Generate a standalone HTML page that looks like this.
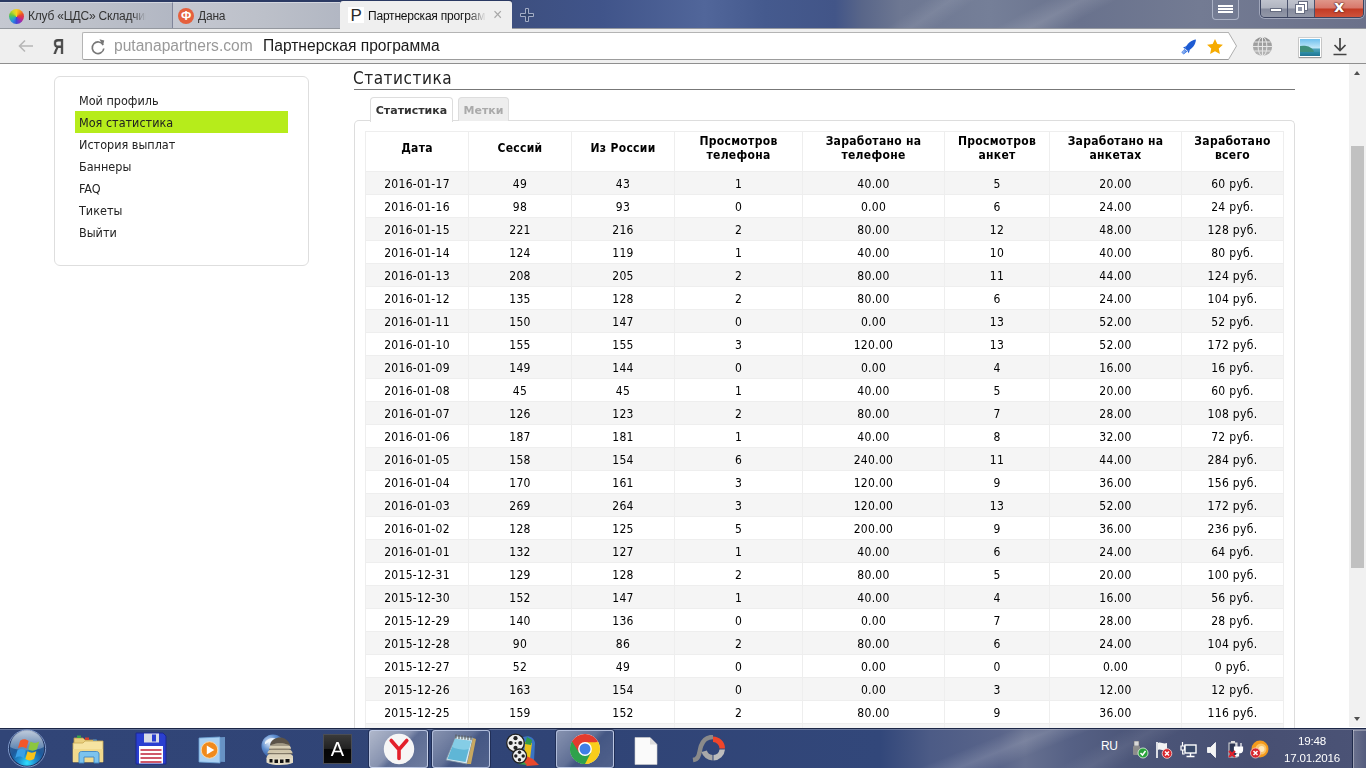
<!DOCTYPE html>
<html lang="ru">
<head>
<meta charset="utf-8">
<title>Партнерская программа</title>
<style>
*{box-sizing:border-box;margin:0;padding:0}
html,body{width:1366px;height:768px;overflow:hidden;background:#fff}
body{position:relative;font-family:"DejaVu Sans Condensed","DejaVu Sans","Liberation Sans",sans-serif;font-size:12px;color:#000}
.abs{position:absolute}
/* ---------- browser chrome ---------- */
#titlebar{position:absolute;left:0;top:0;width:1366px;height:29px;
 background:linear-gradient(90deg,#3d4f80 0,#3d4f7f 512px,#40548a 600px,#51669a 705px,#455a8e 765px,#425588 835px,#596689 862px,#6d7792 900px,#757f98 990px,#69728d 1080px,#737b93 1200px,#6b718a 1366px);}
#titlebar .topline{position:absolute;left:0;top:0;width:512px;height:2px;background:#2b3a63}
.tab{position:absolute;top:2px;height:27px;font-family:"Liberation Sans",sans-serif;font-size:12px;letter-spacing:-.2px;color:#333;white-space:nowrap;overflow:hidden}
.tab.in{background:linear-gradient(90deg,#c5c8d1,#bcc0c9 55%,#b2b7c3);border-right:1px solid #80859a;border-top:1px solid #d3d6de;height:26px;border-bottom:none}
.tab.act{z-index:5;background:#efefef;border-radius:3px 3px 0 0;top:1px;height:28px;color:#111}
.tab.act .t{top:8px}.tab.act .fav{top:6px}.tab.act .x{top:4px}
.tab .t{position:absolute;top:6px;left:28px}
#toolbar{position:absolute;left:0;top:28px;width:1366px;height:36px;background:#efefef;border-bottom:1px solid #8f8f8f;border-top:1px solid #94989f}
#toolbar .bl{position:absolute;left:0;bottom:0;width:1366px;height:1px;background:#a5a5a5}
#omni{position:absolute;left:82px;top:3px;width:1147px;height:28px;background:#fff;border:1px solid #b4b4b4;border-bottom-color:#9c9c9c;border-right:none;border-radius:2px 0 0 2px}

.fav{position:absolute;left:8px;top:5px;width:16px;height:16px}
.wheel{border-radius:50%;background:conic-gradient(#f6d21f,#f39a1c,#e8482c,#d42a6a,#8a2fc0,#3e47d6,#2b8be0,#2fb4a0,#6fc53a,#c9d82a,#f6d21f);left:9px;width:15px;height:15px;top:6px}
.fcirc{border-radius:50%;background:#e5603d;color:#fff;font:bold 12px/16px "Liberation Sans",sans-serif;text-align:center;left:5px;top:5px}
.psq{background:#fff;color:#2a2a2a;font:17px/17px "Liberation Sans",sans-serif;text-align:center;left:8px;top:5px}
.tab .x{position:absolute;left:153px;top:3px;font:16px/20px "Liberation Sans",sans-serif;color:#a8a8a8}
.fade{width:118px;overflow:hidden;-webkit-mask-image:linear-gradient(90deg,#000 104px,transparent 118px);mask-image:linear-gradient(90deg,#000 104px,transparent 118px)}
.fade2{width:118px;overflow:hidden;-webkit-mask-image:linear-gradient(90deg,#000 100px,transparent 118px);mask-image:linear-gradient(90deg,#000 100px,transparent 118px)}
#menubtn{position:absolute;left:1212px;top:-3px;width:27px;height:23px;border:1px solid rgba(200,206,222,.65);border-radius:4px;background:rgba(120,128,152,.35)}
#menubtn i{position:absolute;left:5px;width:15px;height:2px;background:#fff}
#menubtn i:nth-child(1){top:7px}#menubtn i:nth-child(2){top:10px}#menubtn i:nth-child(3){top:13px;height:2px}
#winbtns{position:absolute;left:1260px;top:-1px;width:104px;height:19px;border:1px solid #3c4460;border-top:none;border-radius:0 0 5px 5px;overflow:hidden;box-shadow:0 0 0 1px rgba(220,225,240,.45)}
.wb{position:absolute;top:0;height:19px}
.wb.min{left:0;width:27px;background:linear-gradient(#c2c5cf 0,#b0b4c0 48%,#858a9c 52%,#9499a9 100%);border-right:1px solid #4a516b}
.wb.max{left:27px;width:27px;background:linear-gradient(#c2c5cf 0,#b0b4c0 48%,#858a9c 52%,#9499a9 100%);border-right:1px solid #4a516b}
.wb.cls{left:54px;width:49px;background:linear-gradient(#e09a8d 0,#d8776a 48%,#c23a24 52%,#d0563f 100%)}
.wb.min b{position:absolute;left:9px;top:9px;width:12px;height:4px;background:#fff;border:1px solid #666c80}
.wb.max b{position:absolute;border:2px solid #fff;outline:1px solid #666c80;width:8px;height:8px}
.wb.max .b1{left:11px;top:3px}.wb.max .b2{left:8px;top:6px;background:#9096a8}
.wb.cls span{position:absolute;left:19px;top:-1px;font:bold 16px/18px "DejaVu Sans",sans-serif;color:#fff;text-shadow:0 0 1px #522,0 0 1px #522,0 0 2px #522}
.ya{position:absolute;left:53px;top:5px;font:bold 22px/26px "Liberation Sans",sans-serif;color:#484848;transform:scaleX(.7);transform-origin:0 0}
.url{position:absolute;left:30.5px;top:3px;font:15.6px/20px "Liberation Sans",sans-serif;color:#999;white-space:nowrap}
.ttl{position:absolute;left:179.5px;top:3px;font:15.6px/20px "Liberation Sans",sans-serif;color:#1a1a1a;white-space:nowrap}
.pic{position:absolute;left:1299px;top:9px;width:22px;height:19px;border:1px solid #fff;box-shadow:0 1px 1px #999,0 0 0 1px #cfcfcf;overflow:hidden;background:linear-gradient(#6fc0ee 0,#bfe6f8 50%,#4aa0b8 62%,#2a7f9a 100%)}
.pic:before{content:"";position:absolute;left:-2px;top:7px;width:16px;height:8px;background:#3f8f7c;border-radius:60% 90% 0 0;transform:rotate(8deg)}
.pic:after{content:"";position:absolute;left:0;top:13px;width:22px;height:5px;background:linear-gradient(#2f8fa8,#1f6f90)}
/* ---------- page ---------- */
#page{position:absolute;left:0;top:65px;width:1349px;height:663px;overflow:hidden;will-change:transform}
#side{position:absolute;left:54px;top:11px;width:255px;height:190px;border:1px solid #dedede;border-radius:6px;background:#fff}
#side a{position:absolute;left:20px;width:213px;height:22px;line-height:23px;padding-left:4px;font-size:12.5px;color:#222;text-decoration:none;white-space:nowrap}
#side a.cur{background:#b6ec1b}
h1{position:absolute;left:353px;top:2px;font-size:17px;letter-spacing:.55px;font-weight:normal;color:#222;line-height:22px;white-space:nowrap}
#hr{position:absolute;left:354px;top:24px;width:941px;height:1px;background:#777}
.ptab{position:absolute;top:32px;height:24px;border:1px solid #ddd;border-bottom:none;border-radius:4px 4px 0 0;font-family:"DejaVu Sans","Liberation Sans",sans-serif;font-weight:bold;font-size:11px;line-height:25px;text-align:center;white-space:nowrap}
#panel{position:absolute;left:354px;top:55px;width:941px;height:640px;border:1px solid #ddd;border-radius:5px 5px 0 0;border-bottom:none}
table{position:absolute;left:365px;top:66px;width:918px;border-collapse:collapse;table-layout:fixed;font-size:12px}
td,th{border:1px solid #eee;text-align:center;padding:0;white-space:nowrap}
th{height:40px;font-weight:bold;line-height:14px;white-space:normal;padding-bottom:8px;letter-spacing:.3px}
td{height:23px;line-height:20px;padding-top:2px;letter-spacing:.3px}
tbody tr:nth-child(odd) td{background:#f5f5f5}
/* ---------- scrollbar ---------- */
#sb{position:absolute;left:1349px;top:64px;width:17px;height:663px;background:#f1f1f1}
#sb .th{position:absolute;left:2px;top:82px;width:13px;height:422px;background:#c1c1c1}
#sb .up{position:absolute;left:5px;top:7px;width:0;height:0;border-left:3.5px solid transparent;border-right:3.5px solid transparent;border-bottom:4px solid #505050}
#sb .dn{position:absolute;left:5px;top:653px;width:0;height:0;border-left:3.5px solid transparent;border-right:3.5px solid transparent;border-top:4px solid #505050}
/* ---------- taskbar ---------- */
#taskbar{position:absolute;left:0;top:728px;width:1366px;height:40px;
 background:linear-gradient(90deg,#314577 0,#304476 600px,#32477a 880px,#4c5b86 930px,#5a658a 1000px,#667090 1025px,#566185 1070px,#4c5679 1130px,#474f72 1250px,#4b5376 1366px);
 border-top:1px solid #1c2747}
#taskbar .hl{position:absolute;left:0;top:0;width:1366px;height:1px;background:rgba(255,255,255,.25)}
.tbtn{position:absolute;top:1px;height:38px;border:1px solid rgba(210,220,245,.75);border-radius:3px;background:linear-gradient(135deg,rgba(255,255,255,.42) 0,rgba(255,255,255,.24) 45%,rgba(255,255,255,.1) 55%,rgba(255,255,255,.16) 100%);box-shadow:0 0 0 1px rgba(20,30,60,.55)}
.clock{font:11.6px/14px "Liberation Sans",sans-serif;color:#fff;text-align:center;letter-spacing:-.2px;white-space:nowrap}
.t,.url,.ttl,.clock,.ya,.tab .x{will-change:transform}
.streak{position:absolute;top:0;background:linear-gradient(90deg,rgba(255,255,255,0),rgba(255,255,255,.14) 50%,rgba(255,255,255,0))}
#titlebar,#taskbar{overflow:hidden}
</style>
</head>
<body>

<div id="titlebar">
  <div class="streak" style="left:1020px;width:70px;height:29px;transform:skewX(-62deg);opacity:.9"></div>
  <div class="streak" style="left:905px;width:50px;height:29px;transform:skewX(-55deg);opacity:.6"></div>
  <div class="topline"></div>
  <div class="tab in" style="left:0;width:173px"><span class="fav wheel"></span><span class="t fade">Клуб «ЦДС» Складчики</span></div>
  <div class="tab in" style="left:173px;width:167px;border-right:none"><span class="fav fcirc">Ф</span><span class="t" style="left:25px">Дана</span></div>
  <div class="tab act" style="left:340px;width:172px"><span class="fav psq">P</span><span class="t fade2">Партнерская программа</span><span class="x">×</span></div>
  <svg class="abs" style="left:519px;top:7px" width="16" height="16" viewBox="0 0 16 16"><path d="M6.5 1.5h3v5h5v3h-5v5h-3v-5h-5v-3h5z" fill="#33466f" stroke="#a3adc6" stroke-width="1" stroke-linejoin="round"/></svg>
  <div id="menubtn"><i></i><i></i><i></i></div>
  <div id="winbtns"><div class="wb min"><b></b></div><div class="wb max"><b class="b1"></b><b class="b2"></b></div><div class="wb cls"><span>x</span></div></div>
</div>

<div id="toolbar">
  <svg class="abs" style="left:17px;top:9px" width="18" height="16" viewBox="0 0 18 16"><path d="M8 2.5L2.5 8L8 13.5M2.5 8H16" fill="none" stroke="#b7b7b7" stroke-width="1.6"/></svg>
  <div class="ya">Я</div>
  <div id="omni">
    <svg class="abs" style="left:6px;top:5px" width="18" height="19" viewBox="0 0 16 17"><path d="M12.6 6.2A5.2 5.2 0 1 0 13.2 9.4" fill="none" stroke="#777" stroke-width="1.5"/><path d="M9.3 1.2L13.6 2.2L12.4 6.9z" fill="#777"/></svg>
    <svg class="abs" style="left:1145px;top:-1px" width="10" height="28" viewBox="0 0 10 28"><path d="M0 .5H.5L8.5 14L.5 27.5H0z" fill="#fff"/><path d="M0 .5H.5L8.5 14L.5 27.5H0" fill="none" stroke="#aeaeae" stroke-width="1"/></svg>
    <span class="url">putanapartners.com</span><span class="ttl">Партнерская программа</span>
    <svg class="abs" style="left:1097px;top:6px" width="17" height="17" viewBox="0 0 17 17"><path d="M16 .6C11.2 1.2 7.4 4.4 5 9.4L7.8 12C12.6 9.6 15.6 5.6 16 .6z" fill="#1d5bd3"/><path d="M6.2 7.2L3 8.4L5 9.8zM9.8 10.8L8.8 14.2L7.4 12z" fill="#1d5bd3"/><path d="M4.6 10L1.4 13.2L3.6 15.6L7.2 12.4z" fill="#2e6fe3"/><path d="M2.2 13.4L4.6 11.2M3 14.4L5.6 12" stroke="#fff" stroke-width=".7" fill="none"/></svg>
    <svg class="abs" style="left:1124px;top:6px" width="16" height="15" viewBox="0 0 16 15"><path d="M8 0l2.35 5.1 5.55.6-4.15 3.75L12.9 15 8 12.2 3.1 15l1.15-5.55L.1 5.7l5.55-.6z" fill="#f6ab00"/></svg>
  </div>
  <svg class="abs" style="left:1252px;top:7px" width="21" height="21" viewBox="0 0 21 21"><defs><linearGradient id="gg" x1="0" y1="0" x2="0" y2="1"><stop offset="0" stop-color="#8e8e8e"/><stop offset="1" stop-color="#b9b9b9"/></linearGradient></defs><circle cx="10.5" cy="10.5" r="9.6" fill="url(#gg)"/><ellipse cx="10.5" cy="10.5" rx="4.4" ry="9.4" fill="none" stroke="#e6e6e6" stroke-width="1"/><path d="M10.5 1V20M1 10.5H20M2.4 6H18.6M2.4 15H18.6" fill="none" stroke="#e6e6e6" stroke-width="1"/></svg>
  <div class="pic"></div>
  <svg class="abs" style="left:1333px;top:9px" width="14" height="18" viewBox="0 0 14 18"><path d="M7 0V12M1.5 7L7 12.5L12.5 7M0.5 16.5H13.5" fill="none" stroke="#444" stroke-width="1.7"/></svg>
</div>

<div id="page">
  <div id="side">
    <a style="top:12px">Мой профиль</a>
    <a class="cur" style="top:34px">Моя статистика</a>
    <a style="top:56px">История выплат</a>
    <a style="top:78px">Баннеры</a>
    <a style="top:100px">FAQ</a>
    <a style="top:122px">Тикеты</a>
    <a style="top:144px">Выйти</a>
  </div>
  <h1>Статистика</h1>
  <div id="hr"></div>
  <div id="panel"></div>
  <div class="ptab" style="left:370px;width:83px;background:#fff;color:#333;height:25px">Статистика</div>
  <div class="ptab" style="left:458px;width:51px;background:#eee;color:#aaa">Метки</div>
  <table>
    <colgroup><col style="width:103px"><col style="width:103px"><col style="width:103px"><col style="width:128px"><col style="width:142px"><col style="width:105px"><col style="width:132px"><col style="width:102px"></colgroup>
    <thead><tr><th>Дата</th><th>Сессий</th><th>Из России</th><th>Просмотров<br>телефона</th><th>Заработано на<br>телефоне</th><th>Просмотров<br>анкет</th><th>Заработано на<br>анкетах</th><th>Заработано<br>всего</th></tr></thead>
    <tbody>
<tr><td>2016-01-17</td><td>49</td><td>43</td><td>1</td><td>40.00</td><td>5</td><td>20.00</td><td>60 руб.</td></tr>
<tr><td>2016-01-16</td><td>98</td><td>93</td><td>0</td><td>0.00</td><td>6</td><td>24.00</td><td>24 руб.</td></tr>
<tr><td>2016-01-15</td><td>221</td><td>216</td><td>2</td><td>80.00</td><td>12</td><td>48.00</td><td>128 руб.</td></tr>
<tr><td>2016-01-14</td><td>124</td><td>119</td><td>1</td><td>40.00</td><td>10</td><td>40.00</td><td>80 руб.</td></tr>
<tr><td>2016-01-13</td><td>208</td><td>205</td><td>2</td><td>80.00</td><td>11</td><td>44.00</td><td>124 руб.</td></tr>
<tr><td>2016-01-12</td><td>135</td><td>128</td><td>2</td><td>80.00</td><td>6</td><td>24.00</td><td>104 руб.</td></tr>
<tr><td>2016-01-11</td><td>150</td><td>147</td><td>0</td><td>0.00</td><td>13</td><td>52.00</td><td>52 руб.</td></tr>
<tr><td>2016-01-10</td><td>155</td><td>155</td><td>3</td><td>120.00</td><td>13</td><td>52.00</td><td>172 руб.</td></tr>
<tr><td>2016-01-09</td><td>149</td><td>144</td><td>0</td><td>0.00</td><td>4</td><td>16.00</td><td>16 руб.</td></tr>
<tr><td>2016-01-08</td><td>45</td><td>45</td><td>1</td><td>40.00</td><td>5</td><td>20.00</td><td>60 руб.</td></tr>
<tr><td>2016-01-07</td><td>126</td><td>123</td><td>2</td><td>80.00</td><td>7</td><td>28.00</td><td>108 руб.</td></tr>
<tr><td>2016-01-06</td><td>187</td><td>181</td><td>1</td><td>40.00</td><td>8</td><td>32.00</td><td>72 руб.</td></tr>
<tr><td>2016-01-05</td><td>158</td><td>154</td><td>6</td><td>240.00</td><td>11</td><td>44.00</td><td>284 руб.</td></tr>
<tr><td>2016-01-04</td><td>170</td><td>161</td><td>3</td><td>120.00</td><td>9</td><td>36.00</td><td>156 руб.</td></tr>
<tr><td>2016-01-03</td><td>269</td><td>264</td><td>3</td><td>120.00</td><td>13</td><td>52.00</td><td>172 руб.</td></tr>
<tr><td>2016-01-02</td><td>128</td><td>125</td><td>5</td><td>200.00</td><td>9</td><td>36.00</td><td>236 руб.</td></tr>
<tr><td>2016-01-01</td><td>132</td><td>127</td><td>1</td><td>40.00</td><td>6</td><td>24.00</td><td>64 руб.</td></tr>
<tr><td>2015-12-31</td><td>129</td><td>128</td><td>2</td><td>80.00</td><td>5</td><td>20.00</td><td>100 руб.</td></tr>
<tr><td>2015-12-30</td><td>152</td><td>147</td><td>1</td><td>40.00</td><td>4</td><td>16.00</td><td>56 руб.</td></tr>
<tr><td>2015-12-29</td><td>140</td><td>136</td><td>0</td><td>0.00</td><td>7</td><td>28.00</td><td>28 руб.</td></tr>
<tr><td>2015-12-28</td><td>90</td><td>86</td><td>2</td><td>80.00</td><td>6</td><td>24.00</td><td>104 руб.</td></tr>
<tr><td>2015-12-27</td><td>52</td><td>49</td><td>0</td><td>0.00</td><td>0</td><td>0.00</td><td>0 руб.</td></tr>
<tr><td>2015-12-26</td><td>163</td><td>154</td><td>0</td><td>0.00</td><td>3</td><td>12.00</td><td>12 руб.</td></tr>
<tr><td>2015-12-25</td><td>159</td><td>152</td><td>2</td><td>80.00</td><td>9</td><td>36.00</td><td>116 руб.</td></tr>
<tr><td>2015-12-24</td><td>171</td><td>166</td><td>1</td><td>40.00</td><td>8</td><td>32.00</td><td>72 руб.</td></tr>
    </tbody>
  </table>
</div>

<div id="sb"><div class="up"></div><div class="th"></div><div class="dn"></div></div>

<div id="taskbar"><div class="streak" style="left:965px;width:80px;height:40px;transform:skewX(-68deg)"></div><div class="streak" style="left:1090px;width:60px;height:40px;transform:skewX(-60deg);opacity:.5"></div><div class="hl"></div>
  <!-- start orb -->
  <svg class="abs" style="left:7px;top:0" width="40" height="40" viewBox="0 0 40 40">
    <defs>
      <radialGradient id="orb" cx="50%" cy="92%" r="80%"><stop offset="0" stop-color="#2fe0ff"/><stop offset=".3" stop-color="#1f8fd0"/><stop offset=".6" stop-color="#1d5a9c"/><stop offset="1" stop-color="#41618f"/></radialGradient>
      <linearGradient id="orbh" x1="0" y1="0" x2="0" y2="1"><stop offset="0" stop-color="#dfe8f2" stop-opacity=".8"/><stop offset="1" stop-color="#b8cbe0" stop-opacity=".35"/></linearGradient>
    </defs>
    <circle cx="20" cy="19.5" r="18.6" fill="#1c2f5c" stroke="#7f9acb" stroke-width="1"/>
    <circle cx="20" cy="19.5" r="17.2" fill="url(#orb)"/>
    <path d="M3.2 18A16.8 16.8 0 0 1 36.800 18C30 22.500 10 22.500 3.200 18z" fill="url(#orbh)"/>
    <g transform="translate(20.3 20.6) scale(1.28) translate(-18.1 -19.5)">
    <path d="M12.5 12.5c2.4-1.6 4.6-1.4 6.6.2l-1.7 6c-2-1.5-4.2-1.7-6.6-.2z" fill="#f2572a"/>
    <path d="M20.6 13.2c2.2 1.5 4.400 1.600 6.800 0l-1.700 6c-2.400 1.600-4.600 1.500-6.800 0z" fill="#8cc63f"/>
    <path d="M10.400 20c2.400-1.500 4.600-1.400 6.600.2l-1.700 6c-2-1.600-4.200-1.700-6.600-.2z" fill="#3aa0e8"/>
    <path d="M18.300 20.800c2.200 1.500 4.400 1.600 6.800 0l-1.700 6c-2.400 1.600-4.600 1.500-6.800 0z" fill="#f9c31a"/>
    </g>
  </svg>
  <!-- explorer -->
  <svg class="abs" style="left:72px;top:5px" width="34" height="31" viewBox="0 0 34 31">
    <path d="M2 4h9l2 2h11v5H2z" fill="#e9cf7e" stroke="#b9984a" stroke-width=".8"/>
    <rect x="5" y="1.500" width="4" height="2.500" fill="#3aa04a"/><rect x="13" y="3.500" width="4" height="2.500" fill="#d0402c"/><rect x="21" y="5.500" width="4" height="2.500" fill="#3a88d8"/>
    <path d="M1 9h10l2-2h18v21H1z" fill="#f6e3a1" stroke="#c9a955" stroke-width=".8"/>
    <path d="M1 15h30v13H1z" fill="#f1d98c"/>
    <path d="M7 29V20c0-1.500 1-2.500 2.500-2.500h15c1.500 0 2.500 1 2.500 2.500v9h-5v-6H12v6z" fill="#7cc3ee" stroke="#3f86c4" stroke-width=".9"/>
  </svg>
  <!-- floppy -->
  <svg class="abs" style="left:135px;top:3px" width="32" height="33" viewBox="0 0 32 33">
    <path d="M1 1h27l3 3v28H1z" fill="#2a3fd0" stroke="#1a2890" stroke-width="1"/>
    <rect x="9" y="1.500" width="15" height="9" fill="#d9dde6"/><rect x="17" y="2.500" width="4" height="7" fill="#2a3fd0"/>
    <rect x="4" y="14" width="24" height="17.500" fill="#fff"/>
    <path d="M5.500 18h21M5.500 22h21M5.500 26h21M5.500 30h21" stroke="#c0223a" stroke-width="1.500"/>
  </svg>
  <!-- media player -->
  <svg class="abs" style="left:198px;top:7px" width="29" height="28" viewBox="0 0 29 28">
    <path d="M7 2l20-1v25l-20-1z" fill="#7fb4e6" opacity=".7"/>
    <path d="M1 2l21-1v26L1 26z" fill="#a9d0f2" stroke="#6b9fd3" stroke-width=".8"/>
    <circle cx="11.500" cy="14" r="8.300" fill="#f08a1c" stroke="#fbd9a8" stroke-width="1"/>
    <path d="M8.800 9.500v9l7.500-4.500z" fill="#fff"/>
  </svg>
  <!-- dome -->
  <svg class="abs" style="left:261px;top:5px" width="32" height="31" viewBox="0 0 32 31">
    <defs><radialGradient id="glb" cx="35%" cy="35%" r="70%"><stop offset="0" stop-color="#e8f0fa"/><stop offset=".5" stop-color="#5f8fd0"/><stop offset="1" stop-color="#2a4f98"/></radialGradient></defs>
    <circle cx="12" cy="12" r="11.500" fill="url(#glb)"/>
    <path d="M4 8c3-4 8-5 11-3c-2 1-3 3-6 3s-3 2-5 2z" fill="#f4f8fc" opacity=".9"/>
    <path d="M9 11C10 5.500 15 3.500 19 3.500S27.500 6 29 11z" fill="#5b5348"/>
    <path d="M8 15C8 11 12 9.500 19 9.500s11 1.500 11 5.500z" fill="#d8cfb6"/>
    <path d="M6.500 19.500C6.500 15.500 11 14 19 14s12.500 1.500 12.500 5.500z" fill="#cfc5aa"/>
    <path d="M5.500 24.500C5.500 20 10 18.500 19 18.500s13.500 1.500 13.500 6z" fill="#ddd4bc"/>
    <path d="M9 11h20M8 15.200h22M6.500 19.700h25" stroke="#6e6656" stroke-width="1"/>
    <path d="M5.500 24h27v4.500c-3 2-8 2.500-13.500 2.500S8.500 30.500 5.500 28.500z" fill="#e4dcc6"/>
    <path d="M8.500 25h3v3.500h-3zM13.500 25.500h3.500v3.500h-3.500zM19 25.500h3.500v3.500H19zM24.500 25h4v3.500h-4z" fill="#111"/>
  </svg>
  <!-- A -->
  <div class="abs" style="left:323px;top:5px;width:29px;height:30px;background:linear-gradient(#3a3a3a 0,#222 48%,#050505 52%,#0a0a0a 100%);border:1px solid #4a4d55;will-change:transform;color:#fff;font:20px/28px 'Liberation Sans',sans-serif;text-align:center">A</div>
  <!-- yandex (active) -->
  <div class="tbtn" style="left:369px;width:59px;background:linear-gradient(135deg,rgba(255,255,255,.62) 0,rgba(255,255,255,.42) 45%,rgba(255,255,255,.22) 55%,rgba(255,255,255,.3) 100%)"></div>
  <svg class="abs" style="left:383px;top:4px" width="32" height="32" viewBox="0 0 32 32"><circle cx="16" cy="16" r="15.200" fill="#f6f6f6"/><path d="M8.200 7.500L16 16.500M23.800 7.500L16 16.500V25.500" fill="none" stroke="#e3202b" stroke-width="3.600" stroke-linecap="round" stroke-linejoin="round"/></svg>
  <!-- notepad -->
  <div class="tbtn" style="left:432px;width:58px"></div>
  <svg class="abs" style="left:444px;top:4px" width="36" height="33" viewBox="0 0 36 33">
    <path d="M12 3l17 2-6 26L2 27z" fill="#d8e9f2" stroke="#7b8fa0" stroke-width=".8"/>
    <path d="M29 5l3 1-5 25-4 0z" fill="#c8a860"/>
    <path d="M11 6l16 2-5.500 21L3.500 26z" fill="#5fb6d6"/>
    <path d="M11 6l16 2-2 8C18 18 10 15 8 14z" fill="#8fd3ea" opacity=".8"/>
    <path d="M12 1.500v4M15 2v4M18 2.300v4M21 2.600v4M24 3v4M27 3.300v4" stroke="#5a5a5a" stroke-width="1.100"/>
  </svg>
  <!-- film -->
  <svg class="abs" style="left:505px;top:4px" width="36" height="34" viewBox="0 0 36 34">
    <path d="M15 6c6-5 14-3 15 4l-1 17-9-2z" fill="#3a74c4"/>
    <path d="M20 9l7 1-2 16-6-2z" fill="#e9c21a"/><path d="M22 4l5 3-1 5-6-1z" fill="#2f9a48"/>
    <path d="M19 22l9 4 6 6-12 1-5-4z" fill="#e8472c"/><path d="M17 27l5 5-9-1z" fill="#3aa04a"/>
    <circle cx="10.500" cy="10" r="8.800" fill="#efefef" stroke="#222" stroke-width="1.300"/>
    <circle cx="10.500" cy="5.200" r="2.100" fill="#222"/><circle cx="10.500" cy="14.800" r="2.100" fill="#222"/><circle cx="5.700" cy="10" r="2.100" fill="#222"/><circle cx="15.300" cy="10" r="2.100" fill="#222"/><circle cx="10.500" cy="10" r="1" fill="#222"/>
    <circle cx="14.500" cy="23" r="7" fill="#efefef" stroke="#222" stroke-width="1.300"/>
    <circle cx="14.500" cy="19.300" r="1.700" fill="#222"/><circle cx="14.500" cy="26.700" r="1.700" fill="#222"/><circle cx="10.800" cy="23" r="1.700" fill="#222"/><circle cx="18.200" cy="23" r="1.700" fill="#222"/>
  </svg>
  <!-- chrome -->
  <div class="tbtn" style="left:556px;width:58px"></div>
  <svg class="abs" style="left:569px;top:4px" width="32" height="32" viewBox="0 0 32 32">
    <circle cx="16" cy="16" r="15" fill="#fff"/>
    <path d="M16 16L3.010 8.500A15 15 0 0 1 28.990 8.500z" fill="#e33b2e"/>
    <path d="M16 16L28.990 8.500A15 15 0 0 1 16 31z" fill="#f9cd1c"/>
    <path d="M16 16L16 31A15 15 0 0 1 3.010 8.500z" fill="#2fa24c"/>
    <path d="M16 9.200H28.600A15 15 0 0 0 3.010 8.500L9.500 19.700z" fill="#e33b2e"/>
    <path d="M22 19.500L16 31A15 15 0 0 0 28.700 9.200H16z" fill="#f9cd1c"/>
    <path d="M10 19.500L3.010 8.500A15 15 0 0 0 16 31L22 19.500z" fill="#2fa24c"/>
    <circle cx="16" cy="16" r="6.900" fill="#fff"/><circle cx="16" cy="16" r="5.500" fill="#3f7fe6"/>
  </svg>
  <!-- blank page -->
  <svg class="abs" style="left:634px;top:8px" width="24" height="28" viewBox="0 0 24 28"><path d="M1 .5h15l7 7V27.500H1z" fill="#fafafa" stroke="#d0d0d0" stroke-width=".6"/><path d="M16 .5v7h7z" fill="#dcdcdc"/></svg>
  <!-- photoscape -->
  <svg class="abs" style="left:692px;top:6px" width="34" height="28" viewBox="0 0 34 28">
    <path d="M1 25c7-1 6-8 8-14S15 2 21 2" fill="none" stroke="#8a8a8a" stroke-width="4.500"/>
    <path d="M21 1.500A12 12 0 0 1 33 13.500H27.500A6.500 6.500 0 0 0 21 7z" fill="#f0452a"/>
    <path d="M33 14.500A12 12 0 0 1 21.500 25.500V20A6.500 6.500 0 0 0 27.500 14.500z" fill="#bdbdbd"/>
    <path d="M20.500 25.500A12 12 0 0 1 9.500 17l5.300-1.500A6.500 6.500 0 0 0 20.500 20z" fill="#a9a9a9"/>
  </svg>
  <!-- tray -->
  <div class="abs" style="left:1101px;top:10px;font:12px/14px 'Liberation Sans',sans-serif;color:#fff;letter-spacing:-.3px">RU</div>
  <svg class="abs" style="left:1131px;top:12px" width="18" height="18" viewBox="0 0 18 18"><rect x="3" y="0" width="5" height="5" fill="#d9d9d9" stroke="#666" stroke-width=".6"/><rect x="2" y="5" width="7" height="9" rx="1" fill="#8c8c8c"/><circle cx="12" cy="12" r="5" fill="#28a33a" stroke="#e6f5e6" stroke-width=".8"/><path d="M9.500 12l2 2 3-4" fill="none" stroke="#fff" stroke-width="1.500"/></svg>
  <svg class="abs" style="left:1155px;top:12px" width="18" height="18" viewBox="0 0 18 18"><path d="M2 1v16" stroke="#fff" stroke-width="1.600"/><path d="M3 2c3-1.500 5 1.500 9 0v7c-4 1.500-6-1.500-9 0z" fill="#f2f2f2"/><circle cx="12" cy="12.500" r="4.800" fill="#d8262c" stroke="#f7dada" stroke-width=".8"/><path d="M10 10.500l4 4M14 10.500l-4 4" stroke="#fff" stroke-width="1.500"/></svg>
  <svg class="abs" style="left:1180px;top:12px" width="18" height="18" viewBox="0 0 18 18"><rect x="5" y="4" width="11" height="8" fill="#3a4a6a" stroke="#fff" stroke-width="1.400"/><path d="M10.500 12v3M6.500 15.500h8" stroke="#fff" stroke-width="1.400"/><path d="M2.500 1v4M1 5h3.500v4H1zM2.700 9v4h2" fill="none" stroke="#fff" stroke-width="1.200"/></svg>
  <svg class="abs" style="left:1206px;top:12px" width="12" height="18" viewBox="0 0 12 18"><path d="M1.500 6.500h3l5-5v15l-5-5h-3z" fill="#f4f4f4" stroke="#fff" stroke-width=".8"/></svg>
  <svg class="abs" style="left:1227px;top:11px" width="18" height="19" viewBox="0 0 18 19"><rect x="2" y="3" width="8" height="14" fill="#2d3754" stroke="#ddd" stroke-width="1"/><rect x="4" y="1" width="4" height="2" fill="#ddd"/><path d="M9 3v4M14 3v4M7.500 7h8v3c0 2-2 3-4 3s-4-1-4-3zM11.500 13v3H7" fill="#fff" stroke="#fff" stroke-width="1.200"/><path d="M2 11l6 6M8 11l-6 6" stroke="#e3202b" stroke-width="2"/></svg>
  <svg class="abs" style="left:1250px;top:11px" width="19" height="19" viewBox="0 0 19 19"><circle cx="10" cy="9" r="8.500" fill="#f39a1c"/><circle cx="11" cy="9" r="5.500" fill="#f9c56a"/><circle cx="11.500" cy="9" r="3" fill="#fde7b8"/><circle cx="5.500" cy="13" r="5" fill="#d8262c" stroke="#f7dada" stroke-width=".7"/><path d="M3.500 11l4 4M7.500 11l-4 4" stroke="#fff" stroke-width="1.500"/></svg>
  <div class="abs clock" style="left:1282px;top:5px;width:60px">19:48</div>
  <div class="abs clock" style="left:1282px;top:22px;width:60px">17.01.2016</div>
  <div class="abs" style="left:1352px;top:1px;width:14px;height:39px;border-left:1px solid #1f2a4a;box-shadow:inset 1px 0 0 rgba(255,255,255,.35),inset 0 1px 0 rgba(255,255,255,.3);background:linear-gradient(90deg,rgba(255,255,255,.18),rgba(255,255,255,.05))"></div>
</div>

</body>
</html>
